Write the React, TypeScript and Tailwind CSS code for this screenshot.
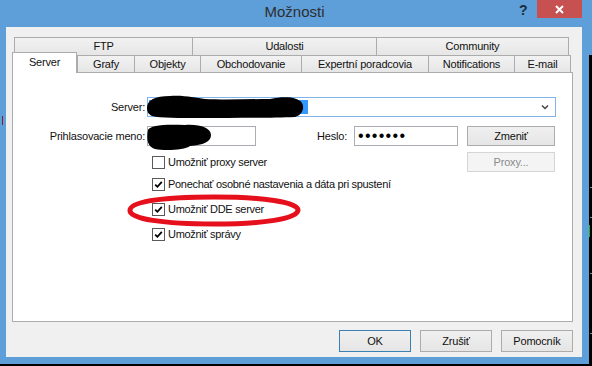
import React from "react";

const font = "font-['Liberation_Sans',Arial,sans-serif]";

type TabProps = { label: string; w: string; last?: boolean };

function Tab({ label, w, last }: TabProps) {
  return (
    <div
      className={`${w} h-full flex items-center justify-center border-t border-l border-[#acacac] bg-gradient-to-b from-[#f2f2f2] to-[#e6e6e6] text-[11px] tracking-[-0.2px] text-[#111] ${
        last ? "border-r" : ""
      }`}
    >
      {label}
    </div>
  );
}

function Check({ checked }: { checked?: boolean }) {
  return (
    <div className="w-[13px] h-[13px] border border-[#5a5a5a] bg-white flex items-center justify-center shrink-0">
      {checked && (
        <svg width="11" height="11" viewBox="0 0 11 11">
          <path d="M2.2 5.6 L4.4 7.8 L8.8 2.8" fill="none" stroke="#000" strokeWidth="1.8" />
        </svg>
      )}
    </div>
  );
}

function CheckRow({ label, checked, h }: { label: string; checked?: boolean; h: string }) {
  return (
    <div className={`${h} flex items-center pl-[139px]`}>
      <Check checked={checked} />
      <span className="ml-[3px] text-[11px] tracking-[-0.3px] text-[#111]">{label}</span>
    </div>
  );
}

function Button({ label, w, h, primary, disabled }: { label: string; w: string; h: string; primary?: boolean; disabled?: boolean }) {
  let look = "border-[#acacac] bg-gradient-to-b from-[#f0f0f0] to-[#e5e5e5] text-[#111]";
  if (primary) look = "border-[#3c7fb1] bg-gradient-to-b from-[#f0f0f0] to-[#e5e5e5] text-[#111]";
  if (disabled) look = "border-[#d5d5d5] bg-[#f4f4f4] text-[#8a8a8a]";
  return (
    <div className={`${w} ${h} border ${look} flex items-center justify-center text-[11px] tracking-[-0.2px]`}>
      {label}
    </div>
  );
}

function Panel() {
  return (
    <div className="w-[561px] h-[250px] border border-[#acacac] bg-white pt-[24px]">
      <div className="flex items-center h-[20px]">
        <span className="w-[132px] text-right text-[11px] tracking-[-0.2px] text-[#111]">Server:</span>
        <div className="ml-[2px] w-[409px] h-[20px] border border-[#7eb4ea] bg-white flex items-center">
          <div className="ml-[1px] w-[159px] h-[14px] bg-[#3399ff]" />
          <svg className="ml-auto mr-[6px]" width="8" height="6" viewBox="0 0 8 6">
            <path d="M1 1.5 L4 4.5 L7 1.5" fill="none" stroke="#444" strokeWidth="1.5" />
          </svg>
        </div>
      </div>

      <div className="flex items-center h-[20px] mt-[9px]">
        <span className="w-[132px] text-right text-[11px] tracking-[-0.2px] text-[#111]">Prihlasovacie meno:</span>
        <div className="ml-[2px] w-[109px] h-[20px] border border-[#abadb3] bg-white" />
        <span className="w-[91px] text-right text-[11px] tracking-[-0.2px] text-[#111]">Heslo:</span>
        <div className="ml-[7px] w-[104px] h-[20px] border border-[#abadb3] bg-white flex items-center pl-[3px]">
          <span className="text-[16px] leading-none tracking-[1.3px] text-black">•••••••</span>
        </div>
        <div className="ml-[9px]">
          <Button label="Zmeniť" w="w-[88px]" h="h-[20px]" />
        </div>
      </div>

      <div className="flex items-center h-[20px] mt-[6px]">
        <div className="pl-[139px] flex items-center">
          <Check />
          <span className="ml-[3px] text-[11px] tracking-[-0.3px] text-[#111]">Umožniť proxy server</span>
        </div>
        <div className="ml-auto mr-[17px]">
          <Button label="Proxy..." w="w-[88px]" h="h-[20px]" disabled />
        </div>
      </div>

      <CheckRow h="h-[25px]" checked label="Ponechať osobné nastavenia a dáta pri spustení" />
      <CheckRow h="h-[25px]" checked label="Umožniť DDE server" />
      <CheckRow h="h-[25px]" checked label="Umožniť správy" />
    </div>
  );
}

function Client() {
  return (
    <div className="flex-1 bg-[#f0f0f0] pl-[6px] pt-[10px] flex flex-col">
      <div className="flex h-[18px] ml-[2px]">
        <Tab label="FTP" w="w-[178px]" />
        <Tab label="Udalosti" w="w-[184px]" />
        <Tab label="Community" w="w-[193px]" last />
      </div>
      <div className="flex h-[17px] items-end">
        <div className="relative z-10 w-[65px] h-[21px] -mb-px border-t border-l border-r border-[#acacac] bg-white flex items-center justify-center pb-[2px] text-[11px] tracking-[-0.2px] text-[#111]">
          Server
        </div>
        <div className="flex h-full">
          <Tab label="Grafy" w="w-[57px]" />
          <Tab label="Objekty" w="w-[66px]" />
          <Tab label="Obchodovanie" w="w-[101px]" />
          <Tab label="Expertní poradcovia" w="w-[127px]" />
          <Tab label="Notifications" w="w-[86px]" />
          <Tab label="E-mail" w="w-[57px]" last />
        </div>
      </div>
      <Panel />
      <div className="w-[561px] flex justify-end gap-[9px] mt-[8px]">
        <Button label="OK" w="w-[72px]" h="h-[22px]" primary />
        <Button label="Zrušiť" w="w-[72px]" h="h-[22px]" />
        <Button label="Pomocník" w="w-[72px]" h="h-[22px]" />
      </div>
    </div>
  );
}

function Window() {
  return (
    <div className="relative w-[589px] h-[364px] bg-[#5e9fd9] flex flex-col">
      <div className="relative h-[27px] flex items-center justify-center pb-[3px]">
        <span className="text-[15px] text-[#2e2e2e]">Možnosti</span>
        <span className="absolute left-[519px] top-[0px] text-[14px] font-bold text-[#1c2c3c]">?</span>
        <div className="absolute left-[537px] top-0 w-[45px] h-[18px] bg-[#c75050] flex items-center justify-center">
          <svg width="9" height="9" viewBox="0 0 9 9">
            <path d="M1 1 L8 8 M8 1 L1 8" stroke="#fff" strokeWidth="2" />
          </svg>
        </div>
      </div>
      <div className="flex-1 flex pl-[6px] pr-[7px] pb-[7px]">
        <Client />
      </div>
      <div className="absolute left-[2px] top-[116px] w-[1px] h-[9px] bg-[#8a1c2a]" />
    </div>
  );
}

function RightStrip() {
  return (
    <div className="w-[3px] h-[364px] flex flex-col">
      <div className="h-[55px] bg-[#5e9fd9]" />
      <div className="relative flex-1 bg-black">
        <div className="absolute right-0 top-[132px] w-[2px] h-px bg-[#888]" />
        <div className="absolute right-0 top-[162px] w-[2px] h-px bg-[#888]" />
        <div className="absolute left-0 top-[170px] w-px h-[12px] bg-[#1fae2a]" />
        <div className="absolute right-0 top-[218px] w-[2px] h-px bg-[#888]" />
        <div className="absolute right-0 top-[278px] w-[2px] h-px bg-[#888]" />
      </div>
    </div>
  );
}

export default function App() {
  return (
    <div className={`relative w-[592px] h-[366px] bg-black ${font}`}>
      <div className="flex">
        <Window />
        <RightStrip />
      </div>
      <svg className="absolute left-0 top-0 pointer-events-none" width="592" height="366" viewBox="0 0 592 366">
        <path
          d="M147,108 C147,100 155,96 170,96 C185,95 195,98 205,99 C225,100 250,99 270,99 C285,96 298,97 302,103 C305,108 302,115 295,117 C270,118 230,118 200,118 C180,118 160,118 152,116 C148,114 147,111 147,108 Z"
          fill="#000"
        />
        <path
          d="M148,130 C150,125 165,124 185,125 C200,124 211,128 211,135 C211,142 203,145 190,146 C185,150 165,151 155,149 C148,147 146,140 148,130 Z"
          fill="#000"
        />
        <path
          d="M214,197 C262,197 298,202 298,210 C298,219 262,224 214,224 C164,224 129,219 130,210 C131,201 166,197 214,197 Z"
          fill="none"
          stroke="#e60f1c"
          strokeWidth="5"
        />
      </svg>
    </div>
  );
}
